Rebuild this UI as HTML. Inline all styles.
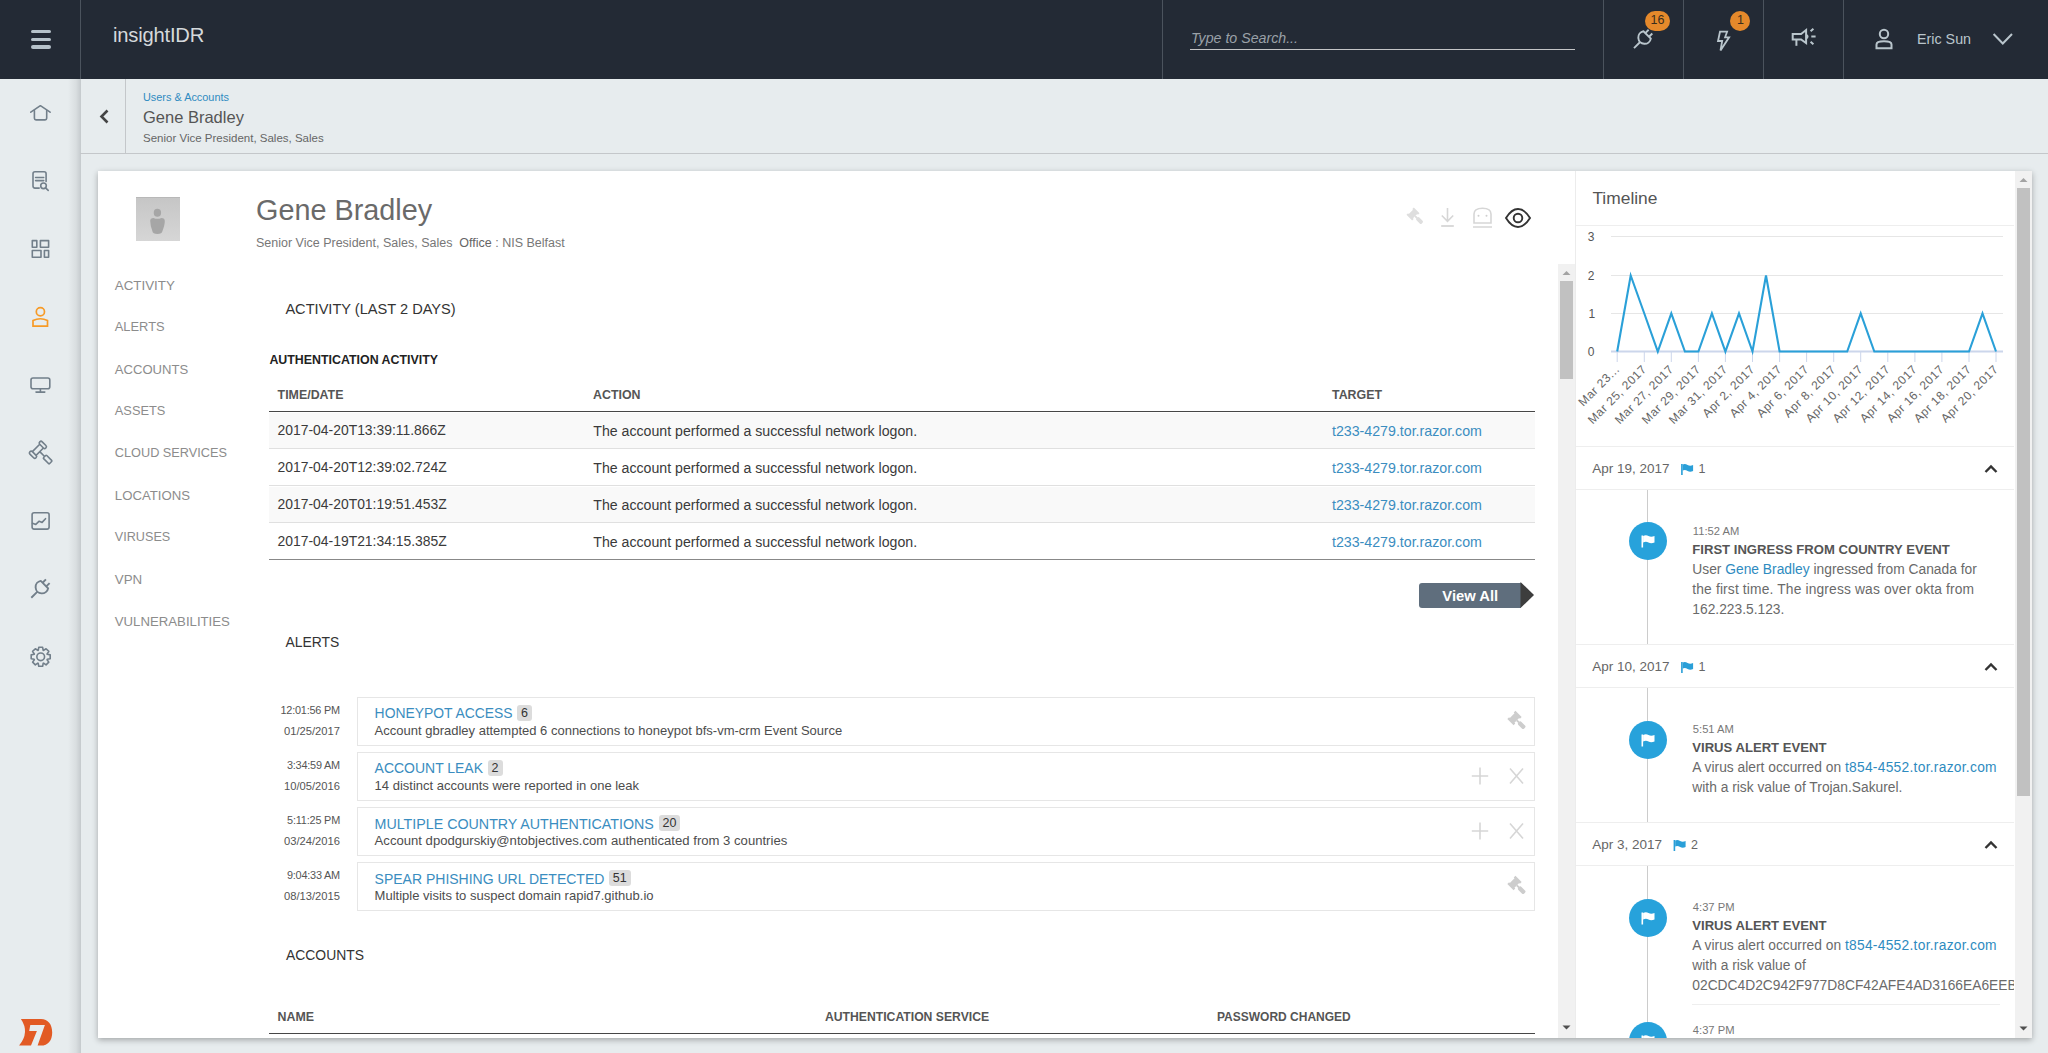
<!DOCTYPE html>
<html><head><meta charset="utf-8">
<style>
*{box-sizing:border-box;margin:0;padding:0}
html,body{width:2048px;height:1053px;overflow:hidden;background:#e7ecee;font-family:"Liberation Sans",sans-serif;position:relative}
.a{position:absolute}
.t{position:absolute;white-space:nowrap;line-height:1}
svg.ov{position:absolute;left:0;top:0;width:2048px;height:1053px;pointer-events:none}
</style></head><body>
<div class="a" style="left:0px;top:0px;width:2048px;height:79px;background:#232a35;"></div>
<div class="a" style="left:0px;top:79px;width:81px;height:974px;background:linear-gradient(to right,#e7ecee 0,#e7ecee 68px,#d9dee0 76px,#c5cacd 81px);"></div>
<div class="a" style="left:80px;top:153px;width:1968px;height:1px;background:#c4c7ca;"></div>
<div class="a" style="left:125px;top:79px;width:1px;height:74px;background:#c4c7ca;"></div>
<div class="a" style="left:98px;top:171px;width:1934px;height:867px;background:#fff;box-shadow:0 2px 6px rgba(0,0,0,.3)"></div>
<div class="a" style="left:31px;top:30px;width:20px;height:3px;background:#b6c2ca;border-radius:2px"></div>
<div class="a" style="left:31px;top:38px;width:20px;height:3px;background:#b6c2ca;border-radius:2px"></div>
<div class="a" style="left:31px;top:45px;width:20px;height:3.5px;background:#b6c2ca;border-radius:2px"></div>
<div class="a" style="left:80px;top:0px;width:1px;height:79px;background:#4b535d;"></div>
<div class="a" style="left:1162px;top:0px;width:1px;height:79px;background:#4b535d;"></div>
<div class="a" style="left:1603px;top:0px;width:1px;height:79px;background:#4b535d;"></div>
<div class="a" style="left:1683px;top:0px;width:1px;height:79px;background:#4b535d;"></div>
<div class="a" style="left:1763px;top:0px;width:1px;height:79px;background:#4b535d;"></div>
<div class="a" style="left:1843px;top:0px;width:1px;height:79px;background:#4b535d;"></div>
<div class="t" style="left:113.0px;top:24.5px;font-size:20.2px;color:#d5d9dc;font-weight:normal;font-style:normal;letter-spacing:-0.2px">insightIDR</div>
<div class="t" style="left:1191.0px;top:31.0px;font-size:14.2px;color:#9aa1a8;font-weight:normal;font-style:italic;">Type to Search...</div>
<div class="a" style="left:1190px;top:49px;width:385px;height:1px;background:#c4c5c7;"></div>
<div class="t" style="left:1917.0px;top:32.1px;font-size:14.3px;color:#b9c5cc;font-weight:normal;font-style:normal;">Eric Sun</div>
<div class="a" style="left:1645px;top:11px;width:25px;height:20px;background:#e5892b;border-radius:10px"></div>
<div class="t" style="left:1650.5px;top:13.6px;font-size:12.5px;color:#3a2d1c;font-weight:normal;font-style:normal;">16</div>
<div class="a" style="left:1730px;top:11px;width:20px;height:20px;background:#e5892b;border-radius:10px"></div>
<div class="t" style="left:1737.0px;top:13.6px;font-size:12.5px;color:#3a2d1c;font-weight:normal;font-style:normal;">1</div>
<div class="t" style="left:143.0px;top:91.6px;font-size:10.9px;color:#2f8bc1;font-weight:normal;font-style:normal;">Users &amp; Accounts</div>
<div class="t" style="left:143.0px;top:109.4px;font-size:16.5px;color:#555;font-weight:normal;font-style:normal;">Gene Bradley</div>
<div class="t" style="left:143.0px;top:133.3px;font-size:11.5px;color:#666;font-weight:normal;font-style:normal;">Senior Vice President, Sales, Sales</div>
<div class="a" style="left:136px;top:197px;width:44px;height:44px;background:linear-gradient(#c6c6c6,#d6d6d6);border-top:1px solid #b8b8b8"></div>
<div class="t" style="left:114.8px;top:278.7px;font-size:13.33px;color:#8c8c8c;font-weight:normal;font-style:normal;">ACTIVITY</div>
<div class="t" style="left:114.8px;top:321.1px;font-size:12.86px;color:#8c8c8c;font-weight:normal;font-style:normal;">ALERTS</div>
<div class="t" style="left:114.8px;top:362.9px;font-size:13.08px;color:#8c8c8c;font-weight:normal;font-style:normal;">ACCOUNTS</div>
<div class="t" style="left:114.8px;top:405.2px;font-size:12.82px;color:#8c8c8c;font-weight:normal;font-style:normal;">ASSETS</div>
<div class="t" style="left:114.8px;top:447.3px;font-size:12.72px;color:#8c8c8c;font-weight:normal;font-style:normal;">CLOUD SERVICES</div>
<div class="t" style="left:114.8px;top:488.8px;font-size:13.2px;color:#8c8c8c;font-weight:normal;font-style:normal;">LOCATIONS</div>
<div class="t" style="left:114.8px;top:531.3px;font-size:12.64px;color:#8c8c8c;font-weight:normal;font-style:normal;">VIRUSES</div>
<div class="t" style="left:114.8px;top:572.7px;font-size:13.33px;color:#8c8c8c;font-weight:normal;font-style:normal;">VPN</div>
<div class="t" style="left:114.8px;top:614.8px;font-size:13.2px;color:#8c8c8c;font-weight:normal;font-style:normal;">VULNERABILITIES</div>
<div class="t" style="left:256.0px;top:195.7px;font-size:28.8px;color:#6a6a6a;font-weight:normal;font-style:normal;">Gene Bradley</div>
<div class="t" style="left:256.0px;top:236.9px;font-size:12.5px;color:#777;font-weight:normal;font-style:normal;">Senior Vice President, Sales, Sales &nbsp;<span style="color:#666">Office</span> : NIS Belfast</div>
<div class="a" style="left:1558px;top:264px;width:17px;height:774px;background:#f1f1f1;"></div>
<div class="a" style="left:1560px;top:281px;width:13px;height:98px;background:#c1c1c1;"></div>
<div class="t" style="left:285.4px;top:302.1px;font-size:14.6px;color:#333;font-weight:normal;font-style:normal;">ACTIVITY (LAST 2 DAYS)</div>
<div class="t" style="left:269.4px;top:353.7px;font-size:12.4px;color:#222;font-weight:bold;font-style:normal;">AUTHENTICATION ACTIVITY</div>
<div class="t" style="left:277.6px;top:388.5px;font-size:12.4px;color:#555;font-weight:bold;font-style:normal;">TIME/DATE</div>
<div class="t" style="left:593.0px;top:388.5px;font-size:12.4px;color:#555;font-weight:bold;font-style:normal;">ACTION</div>
<div class="t" style="left:1332.0px;top:388.5px;font-size:12.4px;color:#555;font-weight:bold;font-style:normal;">TARGET</div>
<div class="a" style="left:269px;top:411px;width:1266px;height:1px;background:#474747;"></div>
<div class="a" style="left:269px;top:413px;width:1266px;height:36px;background:#f9f9f9;"></div>
<div class="a" style="left:269px;top:448px;width:1266px;height:1px;background:#e0e0e0;"></div>
<div class="t" style="left:277.6px;top:423.8px;font-size:13.9px;color:#3a3a3a;font-weight:normal;font-style:normal;">2017-04-20T13:39:11.866Z</div>
<div class="t" style="left:593.3px;top:423.5px;font-size:14.15px;color:#3a3a3a;font-weight:normal;font-style:normal;">The account performed a successful network logon.</div>
<div class="t" style="left:1332.0px;top:423.5px;font-size:14.2px;color:#3b8dc0;font-weight:normal;font-style:normal;">t233-4279.tor.razor.com</div>
<div class="a" style="left:269px;top:485px;width:1266px;height:1px;background:#e0e0e0;"></div>
<div class="t" style="left:277.6px;top:460.8px;font-size:13.9px;color:#3a3a3a;font-weight:normal;font-style:normal;">2017-04-20T12:39:02.724Z</div>
<div class="t" style="left:593.3px;top:460.5px;font-size:14.15px;color:#3a3a3a;font-weight:normal;font-style:normal;">The account performed a successful network logon.</div>
<div class="t" style="left:1332.0px;top:460.5px;font-size:14.2px;color:#3b8dc0;font-weight:normal;font-style:normal;">t233-4279.tor.razor.com</div>
<div class="a" style="left:269px;top:487px;width:1266px;height:36px;background:#f9f9f9;"></div>
<div class="a" style="left:269px;top:522px;width:1266px;height:1px;background:#e0e0e0;"></div>
<div class="t" style="left:277.6px;top:497.8px;font-size:13.9px;color:#3a3a3a;font-weight:normal;font-style:normal;">2017-04-20T01:19:51.453Z</div>
<div class="t" style="left:593.3px;top:497.5px;font-size:14.15px;color:#3a3a3a;font-weight:normal;font-style:normal;">The account performed a successful network logon.</div>
<div class="t" style="left:1332.0px;top:497.5px;font-size:14.2px;color:#3b8dc0;font-weight:normal;font-style:normal;">t233-4279.tor.razor.com</div>
<div class="t" style="left:277.6px;top:534.8px;font-size:13.9px;color:#3a3a3a;font-weight:normal;font-style:normal;">2017-04-19T21:34:15.385Z</div>
<div class="t" style="left:593.3px;top:534.5px;font-size:14.15px;color:#3a3a3a;font-weight:normal;font-style:normal;">The account performed a successful network logon.</div>
<div class="t" style="left:1332.0px;top:534.5px;font-size:14.2px;color:#3b8dc0;font-weight:normal;font-style:normal;">t233-4279.tor.razor.com</div>
<div class="a" style="left:269px;top:559px;width:1266px;height:1px;background:#888;"></div>
<div class="a" style="left:1419px;top:583px;width:102px;height:25px;background:#5f6e7d;border-radius:3px 0 0 3px"></div>
<div class="t" style="left:1442.3px;top:588.5px;font-size:14.8px;color:#fff;font-weight:bold;font-style:normal;">View All</div>
<div class="t" style="left:285.5px;top:635.5px;font-size:13.9px;color:#333;font-weight:normal;font-style:normal;">ALERTS</div>
<div class="a" style="left:357px;top:697px;width:1178px;height:49px;background:#fff;border:1px solid #e6e6e6"></div>
<div class="t" style="right:1708.0px;top:704.8px;font-size:10.9px;color:#555;font-weight:normal;font-style:normal;letter-spacing:-0.2px">12:01:56 PM</div>
<div class="t" style="right:1708.0px;top:726.3px;font-size:11.2px;color:#555;font-weight:normal;font-style:normal;">01/25/2017</div>
<div class="t" style="left:374.6px;top:707.3px;font-size:13.9px;color:#3a8dc0;font-weight:normal;font-style:normal;">HONEYPOT ACCESS</div>
<div class="t" style="left:374.6px;top:724.0px;font-size:13.0px;color:#4d4d4d;font-weight:normal;font-style:normal;">Account gbradley attempted 6 connections to honeypot bfs-vm-crm Event Source</div>
<div class="a" style="left:517.1px;top:705px;width:15.0px;height:16px;background:#dcdcdc;border-radius:3px"></div>
<div class="t" style="left:521.1px;top:707.4px;font-size:12.5px;color:#333;font-weight:normal;font-style:normal;">6</div>
<div class="a" style="left:357px;top:752px;width:1178px;height:49px;background:#fff;border:1px solid #e6e6e6"></div>
<div class="t" style="right:1708.0px;top:759.8px;font-size:10.9px;color:#555;font-weight:normal;font-style:normal;letter-spacing:-0.2px">3:34:59 AM</div>
<div class="t" style="right:1708.0px;top:781.3px;font-size:11.2px;color:#555;font-weight:normal;font-style:normal;">10/05/2016</div>
<div class="t" style="left:374.6px;top:762.2px;font-size:13.97px;color:#3a8dc0;font-weight:normal;font-style:normal;">ACCOUNT LEAK</div>
<div class="t" style="left:374.6px;top:779.0px;font-size:13.0px;color:#4d4d4d;font-weight:normal;font-style:normal;">14 distinct accounts were reported in one leak</div>
<div class="a" style="left:487.5px;top:760px;width:15.0px;height:16px;background:#dcdcdc;border-radius:3px"></div>
<div class="t" style="left:491.5px;top:762.4px;font-size:12.5px;color:#333;font-weight:normal;font-style:normal;">2</div>
<div class="a" style="left:357px;top:807px;width:1178px;height:49px;background:#fff;border:1px solid #e6e6e6"></div>
<div class="t" style="right:1708.0px;top:814.8px;font-size:10.9px;color:#555;font-weight:normal;font-style:normal;letter-spacing:-0.2px">5:11:25 PM</div>
<div class="t" style="right:1708.0px;top:836.3px;font-size:11.2px;color:#555;font-weight:normal;font-style:normal;">03/24/2016</div>
<div class="t" style="left:374.6px;top:817.0px;font-size:14.26px;color:#3a8dc0;font-weight:normal;font-style:normal;">MULTIPLE COUNTRY AUTHENTICATIONS</div>
<div class="t" style="left:374.6px;top:833.9px;font-size:13.12px;color:#4d4d4d;font-weight:normal;font-style:normal;">Account dpodgurskiy@ntobjectives.com authenticated from 3 countries</div>
<div class="a" style="left:658.5px;top:815px;width:21.9px;height:16px;background:#dcdcdc;border-radius:3px"></div>
<div class="t" style="left:662.5px;top:817.4px;font-size:12.5px;color:#333;font-weight:normal;font-style:normal;">20</div>
<div class="a" style="left:357px;top:862px;width:1178px;height:49px;background:#fff;border:1px solid #e6e6e6"></div>
<div class="t" style="right:1708.0px;top:869.8px;font-size:10.9px;color:#555;font-weight:normal;font-style:normal;letter-spacing:-0.2px">9:04:33 AM</div>
<div class="t" style="right:1708.0px;top:891.3px;font-size:11.2px;color:#555;font-weight:normal;font-style:normal;">08/13/2015</div>
<div class="t" style="left:374.6px;top:872.2px;font-size:14.0px;color:#3a8dc0;font-weight:normal;font-style:normal;">SPEAR PHISHING URL DETECTED</div>
<div class="t" style="left:374.6px;top:889.0px;font-size:13.0px;color:#4d4d4d;font-weight:normal;font-style:normal;">Multiple visits to suspect domain rapid7.github.io</div>
<div class="a" style="left:608.8px;top:870px;width:21.9px;height:16px;background:#dcdcdc;border-radius:3px"></div>
<div class="t" style="left:612.8px;top:872.4px;font-size:12.5px;color:#333;font-weight:normal;font-style:normal;">51</div>
<div class="t" style="left:286.0px;top:949.1px;font-size:13.9px;color:#333;font-weight:normal;font-style:normal;">ACCOUNTS</div>
<div class="t" style="left:277.6px;top:1010.5px;font-size:12.4px;color:#555;font-weight:bold;font-style:normal;">NAME</div>
<div class="t" style="left:825.0px;top:1010.7px;font-size:12.2px;color:#555;font-weight:bold;font-style:normal;">AUTHENTICATION SERVICE</div>
<div class="t" style="left:1217.0px;top:1010.9px;font-size:12.0px;color:#555;font-weight:bold;font-style:normal;">PASSWORD CHANGED</div>
<div class="a" style="left:269px;top:1033px;width:1266px;height:1px;background:#474747;"></div>
<div class="a" style="left:1575px;top:171px;width:1px;height:867px;background:#ececec;"></div>
<div class="t" style="left:1592.4px;top:190.3px;font-size:17.4px;color:#555;font-weight:normal;font-style:normal;">Timeline</div>
<div class="a" style="left:1576px;top:225px;width:438px;height:1px;background:#eeeeee;"></div>
<div class="t" style="left:1587.7px;top:345.9px;font-size:12px;color:#555;font-weight:normal;font-style:normal;">0</div>
<div class="t" style="left:1588.5px;top:307.9px;font-size:12px;color:#555;font-weight:normal;font-style:normal;">1</div>
<div class="t" style="left:1587.7px;top:269.9px;font-size:12px;color:#555;font-weight:normal;font-style:normal;">2</div>
<div class="t" style="left:1587.7px;top:230.9px;font-size:12px;color:#555;font-weight:normal;font-style:normal;">3</div>
<div class="a" style="left:1576px;top:446px;width:438px;height:1px;background:#eeeeee;"></div>
<div class="a" style="left:1647px;top:489px;width:1px;height:155px;background:#cccccc;"></div>
<div class="a" style="left:1647px;top:687px;width:1px;height:135px;background:#cccccc;"></div>
<div class="a" style="left:1647px;top:865px;width:1px;height:172px;background:#cccccc;"></div>
<div class="t" style="left:1592.3px;top:462.1px;font-size:13.5px;color:#666;font-weight:normal;font-style:normal;">Apr 19, 2017</div>
<div class="t" style="left:1698.6px;top:462.9px;font-size:12.5px;color:#666;font-weight:normal;font-style:normal;">1</div>
<div class="a" style="left:1576px;top:489px;width:438px;height:1px;background:#eeeeee;"></div>
<div class="a" style="left:1576px;top:446px;width:438px;height:1px;background:#eeeeee;"></div>
<div class="t" style="left:1692.8px;top:525.8px;font-size:11.2px;color:#777;font-weight:normal;font-style:normal;">11:52 AM</div>
<div class="t" style="left:1692.3px;top:542.8px;font-size:13.1px;color:#555;font-weight:bold;font-style:normal;">FIRST INGRESS FROM COUNTRY EVENT</div>
<div class="t" style="left:1692.3px;top:563.3px;font-size:13.8px;color:#6a6a6a;font-weight:normal;font-style:normal;">User <span style="color:#2e8bc0">Gene Bradley</span> ingressed from Canada for</div>
<div class="t" style="left:1692.3px;top:583.3px;font-size:13.8px;color:#6a6a6a;font-weight:normal;font-style:normal;"><span style="letter-spacing:0.15px">the first time. The ingress was over okta from</span></div>
<div class="t" style="left:1692.3px;top:603.3px;font-size:13.8px;color:#6a6a6a;font-weight:normal;font-style:normal;">162.223.5.123.</div>
<div class="t" style="left:1592.3px;top:660.1px;font-size:13.5px;color:#666;font-weight:normal;font-style:normal;">Apr 10, 2017</div>
<div class="t" style="left:1698.6px;top:660.9px;font-size:12.5px;color:#666;font-weight:normal;font-style:normal;">1</div>
<div class="a" style="left:1576px;top:687px;width:438px;height:1px;background:#eeeeee;"></div>
<div class="a" style="left:1576px;top:644px;width:438px;height:1px;background:#eeeeee;"></div>
<div class="t" style="left:1692.8px;top:723.6px;font-size:11.2px;color:#777;font-weight:normal;font-style:normal;">5:51 AM</div>
<div class="t" style="left:1692.3px;top:740.6px;font-size:13.1px;color:#555;font-weight:bold;font-style:normal;">VIRUS ALERT EVENT</div>
<div class="t" style="left:1692.3px;top:761.1px;font-size:13.8px;color:#6a6a6a;font-weight:normal;font-style:normal;">A virus alert occurred on <span style="color:#2e8bc0;letter-spacing:0.27px">t854-4552.tor.razor.com</span></div>
<div class="t" style="left:1692.3px;top:781.1px;font-size:13.8px;color:#6a6a6a;font-weight:normal;font-style:normal;">with a risk value of Trojan.Sakurel.</div>
<div class="t" style="left:1592.3px;top:838.1px;font-size:13.5px;color:#666;font-weight:normal;font-style:normal;">Apr 3, 2017</div>
<div class="t" style="left:1691.1px;top:838.9px;font-size:12.5px;color:#666;font-weight:normal;font-style:normal;">2</div>
<div class="a" style="left:1576px;top:865px;width:438px;height:1px;background:#eeeeee;"></div>
<div class="a" style="left:1576px;top:822px;width:438px;height:1px;background:#eeeeee;"></div>
<div class="t" style="left:1692.8px;top:901.6px;font-size:11.2px;color:#777;font-weight:normal;font-style:normal;">4:37 PM</div>
<div class="t" style="left:1692.3px;top:918.6px;font-size:13.1px;color:#555;font-weight:bold;font-style:normal;">VIRUS ALERT EVENT</div>
<div class="t" style="left:1692.3px;top:939.1px;font-size:13.8px;color:#6a6a6a;font-weight:normal;font-style:normal;">A virus alert occurred on <span style="color:#2e8bc0;letter-spacing:0.27px">t854-4552.tor.razor.com</span></div>
<div class="t" style="left:1692.3px;top:959.1px;font-size:13.8px;color:#6a6a6a;font-weight:normal;font-style:normal;">with a risk value of</div>
<div class="t" style="left:1692.3px;top:979.1px;font-size:13.8px;color:#6a6a6a;font-weight:normal;font-style:normal;"><span style="display:inline-block;width:322px;overflow:hidden;vertical-align:top">02CDC4D2C942F977D8CF42AFE4AD3166EA6EEB6D</span></div>
<div class="a" style="left:1692px;top:1004px;width:308px;height:1px;background:#eeeeee;"></div>
<div class="t" style="left:1692.8px;top:1024.6px;font-size:11.2px;color:#777;font-weight:normal;font-style:normal;">4:37 PM</div>
<div class="a" style="left:2015px;top:171px;width:17px;height:867px;background:#f1f1f1;"></div>
<div class="a" style="left:2017px;top:188px;width:13px;height:608px;background:#c1c1c1;"></div>
<svg class="ov" width="2048" height="1053" viewBox="0 0 2048 1053"><defs><clipPath id="clipc"><rect x="1576" y="171" width="439" height="867"/></clipPath></defs><g transform="translate(1644.6,37.5) rotate(45)" fill="none" stroke="#b9c5cc" stroke-width="1.9"><path d="M-5.17 -3.6 A6.3 6.3 0 1 0 5.17 -3.6 Z"/><path d="M-2.6 -3.6 V-8.3 M2.6 -3.6 V-8.3 M0 6.3 V15"/></g>
<path d="M1720 31.7 H1727.1 L1725.1 37.3 H1729.1 L1720.5 50.4 L1722.2 41 H1718 Z" fill="none" stroke="#b9c5cc" stroke-width="1.8" stroke-linejoin="miter"/>
<g fill="none" stroke="#b9c5cc" stroke-width="2"><path d="M1792.7 34 H1801.1 L1806.1 30 V43 L1801.1 39.5 H1792.7 Z"/><path d="M1796.4 39.5 V45.8"/><path d="M1806.3 34.7 A1.9 1.9 0 0 1 1806.3 38.4" stroke-width="1.6"/><path d="M1811.3 36.5 H1815.6 M1810.6 31.3 L1813.4 28.7 M1810.6 41.7 L1813.4 44.3"/></g>
<g fill="none" stroke="#b9c5cc" stroke-width="2"><circle cx="1884" cy="34" r="4.2"/><path d="M1876.5 48.3 V44.5 Q1876.5 41.3 1884 41.3 Q1891.5 41.3 1891.5 44.5 V48.3 Z"/></g>
<path d="M1993.6 34 L2002.8 43.5 L2012 34" fill="none" stroke="#b9c5cc" stroke-width="2"/>
<g fill="none" stroke="#727f8a" stroke-width="1.6" stroke-linejoin="round" stroke-linecap="round"><path d="M30.8 112.2 L40.4 105.7 L50.1 112.2"/><path d="M34.4 110.5 V118.3 Q34.4 119.9 36 119.9 H45.1 Q46.7 119.9 46.7 118.3 V110.5"/><path d="M46.1 181.5 V173.8 Q46.1 171.8 44.1 171.8 H35 Q33 171.8 33 173.8 V186.1 Q33 188.1 35 188.1 H39.2"/><path d="M35.6 177.5 H43.7 M35.6 180.6 H43.7"/><circle cx="43.5" cy="185.8" r="2.8"/><path d="M45.6 187.9 L48.2 190.4"/><rect x="32.3" y="240.6" width="4.5" height="6.7"/><rect x="40.4" y="240.6" width="8.2" height="6.7"/><rect x="32.3" y="250.5" width="8.7" height="6.7"/><rect x="44.4" y="250.5" width="4.2" height="6.7"/><rect x="31" y="378" width="18.8" height="10.7" rx="2"/><path d="M40.4 388.7 V392 M36 392.1 H44.8"/><rect x="32.1" y="512.7" width="17" height="16.4" rx="2"/><path d="M32.5 523.2 L35.8 524.4 L39.2 521.2 L42.1 522.4 L45.5 518.7"/></g>
<g transform="translate(41.9,587.1) rotate(45)" fill="none" stroke="#727f8a" stroke-width="1.9"><path d="M-5.17 -3.6 A6.3 6.3 0 1 0 5.17 -3.6 Z"/><path d="M-2.6 -3.6 V-8.3 M2.6 -3.6 V-8.3 M0 6.3 V15"/></g>
<g fill="none" stroke="#f79a26" stroke-width="1.7"><circle cx="40.4" cy="311.7" r="4.1"/><path d="M33 326.2 V320.5 Q40.4 317 47.5 320.5 V326.2 Z"/></g>
<g transform="translate(37.9,449.8) rotate(-45)" fill="none" stroke="#727f8a" stroke-width="1.6"><rect x="-8.7" y="-4.3" width="3.5" height="8.6" rx="1.7"/><rect x="5.2" y="-4.3" width="3.5" height="8.6" rx="1.7"/><path d="M-5.2 -2.6 H5.2 M-5.2 2.6 H5.2 M0 2.6 V9.5"/><rect x="-2.2" y="9.5" width="4.4" height="8.5" rx="0.8"/></g>
<path d="M38.23 650.25 L38.77 647.29 L42.63 647.29 L43.17 650.25 L43.59 650.42 L46.06 648.72 L48.78 651.44 L47.08 653.91 L47.25 654.33 L50.21 654.87 L50.21 658.73 L47.25 659.27 L47.08 659.69 L48.78 662.16 L46.06 664.88 L43.59 663.18 L43.17 663.35 L42.63 666.31 L38.77 666.31 L38.23 663.35 L37.81 663.18 L35.34 664.88 L32.62 662.16 L34.32 659.69 L34.15 659.27 L31.19 658.73 L31.19 654.87 L34.15 654.33 L34.32 653.91 L32.62 651.44 L35.34 648.72 L37.81 650.42Z" fill="none" stroke="#727f8a" stroke-width="1.6" stroke-linejoin="round"/><circle cx="40.7" cy="656.8" r="3.85" fill="none" stroke="#727f8a" stroke-width="1.6"/>
<path d="M20.9 1019.1 H41 C48 1019.1 52.2 1024.5 52.2 1032.4 C52.2 1040.3 48 1045.6 41 1045.6 H37.6 L44.9 1024.9 H30.3 L29.2 1031 H36.9 L31 1045.6 H19.1 Q30 1032.4 20.9 1019.1 Z" fill="#e25a24"/>
<path d="M107.5 110.5 L101.5 116.5 L107.5 122.5" fill="none" stroke="#444" stroke-width="2.6"/>
<g fill="#a6a6a6"><ellipse cx="157.4" cy="212.8" rx="3.7" ry="4"/><path d="M150.2 221 Q150.2 218 153.5 217.9 Q157.4 219.8 161.5 217.9 Q164.8 218 164.8 221 Q164.8 225 162.3 231.5 Q162 233.9 157.4 233.9 Q152.8 233.9 152.5 231.5 Q150.2 225 150.2 221 Z"/></g>
<g transform="translate(1413,214) rotate(-45) scale(1)" fill="#dedede"><path d="M-5.2 -4 H-3 V-3 H3 V-4 H5.2 V4 H3 V3 H-3 V4 H-5.2 Z"/><rect x="-0.9" y="3" width="1.8" height="3"/><rect x="-2" y="5.5" width="4" height="7.5" rx="1.5"/></g>
<g fill="none" stroke="#d6d6d6" stroke-width="1.6"><path d="M1447.5 208 V221 M1441.8 215.5 L1447.5 221.3 L1453.2 215.5"/><path d="M1441.2 226 H1453.8" stroke-width="1.8"/><path d="M1474 223 V214 Q1474 208.2 1482.5 208.2 Q1491 208.2 1491 214 V223 Z"/><path d="M1473 227 H1492" stroke-width="1.5"/></g><g fill="#cfcfcf"><circle cx="1478.5" cy="215.8" r="1"/><circle cx="1486.5" cy="215.8" r="1"/></g>
<g fill="none" stroke="#333" stroke-width="1.9"><path d="M1506 218 C1510 211.5 1513.5 209 1518 209 C1522.5 209 1526 211.5 1530 218 C1526 224.5 1522.5 227 1518 227 C1513.5 227 1510 224.5 1506 218 Z"/><circle cx="1518" cy="218" r="4.3"/></g>
<path d="M1562.5 275 L1566.5 271 L1570.5 275 Z" fill="#a3a3a3"/>
<path d="M1562.5 1025.5 L1566.5 1029.5 L1570.5 1025.5 Z" fill="#505050"/>
<path d="M1520.5 582 L1534 595 L1520.5 608 Z" fill="#3d3d3d"/>
<g transform="translate(1514.5,718) rotate(-45) scale(1.1)" fill="#cdcdcd"><path d="M-5.2 -4 H-3 V-3 H3 V-4 H5.2 V4 H3 V3 H-3 V4 H-5.2 Z"/><rect x="-0.9" y="3" width="1.8" height="3"/><rect x="-2" y="5.5" width="4" height="7.5" rx="1.5"/></g>
<g fill="none" stroke="#d6d6d6" stroke-width="1.6"><path d="M1480 767.5 V784.5 M1471.8 776 H1488.2"/><path d="M1510 768.5 L1523 783.5 M1523 768.5 L1510 783.5"/></g>
<g fill="none" stroke="#d6d6d6" stroke-width="1.6"><path d="M1480 822.5 V839.5 M1471.8 831 H1488.2"/><path d="M1510 823.5 L1523 838.5 M1523 823.5 L1510 838.5"/></g>
<g transform="translate(1514.5,883) rotate(-45) scale(1.1)" fill="#cdcdcd"><path d="M-5.2 -4 H-3 V-3 H3 V-4 H5.2 V4 H3 V3 H-3 V4 H-5.2 Z"/><rect x="-0.9" y="3" width="1.8" height="3"/><rect x="-2" y="5.5" width="4" height="7.5" rx="1.5"/></g>
<path d="M1611 351.5 H2003" stroke="#ccd6eb" stroke-width="2"/>
<path d="M1611 313.5 H2003" stroke="#e6e6e6" stroke-width="1.2"/>
<path d="M1611 275.5 H2003" stroke="#e6e6e6" stroke-width="1.2"/>
<path d="M1611 236.5 H2003" stroke="#e6e6e6" stroke-width="1.2"/>
<path d="M1617.2 352 V362" stroke="#ccd6eb" stroke-width="1"/>
<path d="M1644.3 352 V362" stroke="#ccd6eb" stroke-width="1"/>
<path d="M1671.3 352 V362" stroke="#ccd6eb" stroke-width="1"/>
<path d="M1698.4 352 V362" stroke="#ccd6eb" stroke-width="1"/>
<path d="M1725.4 352 V362" stroke="#ccd6eb" stroke-width="1"/>
<path d="M1752.5 352 V362" stroke="#ccd6eb" stroke-width="1"/>
<path d="M1779.6 352 V362" stroke="#ccd6eb" stroke-width="1"/>
<path d="M1806.6 352 V362" stroke="#ccd6eb" stroke-width="1"/>
<path d="M1833.7 352 V362" stroke="#ccd6eb" stroke-width="1"/>
<path d="M1860.7 352 V362" stroke="#ccd6eb" stroke-width="1"/>
<path d="M1887.8 352 V362" stroke="#ccd6eb" stroke-width="1"/>
<path d="M1914.9 352 V362" stroke="#ccd6eb" stroke-width="1"/>
<path d="M1941.9 352 V362" stroke="#ccd6eb" stroke-width="1"/>
<path d="M1969.0 352 V362" stroke="#ccd6eb" stroke-width="1"/>
<path d="M1996.0 352 V362" stroke="#ccd6eb" stroke-width="1"/>
<polyline points="1617.2,351.5 1630.7,275.5 1644.3,313.5 1657.8,351.5 1671.3,313.5 1684.9,351.5 1698.4,351.5 1711.9,313.5 1725.4,351.5 1739.0,313.5 1752.5,351.5 1766.0,275.5 1779.6,351.5 1793.1,351.5 1806.6,351.5 1820.2,351.5 1833.7,351.5 1847.2,351.5 1860.7,313.5 1874.3,351.5 1887.8,351.5 1901.3,351.5 1914.9,351.5 1928.4,351.5 1941.9,351.5 1955.5,351.5 1969.0,351.5 1982.5,313.5 1996.0,351.5" fill="none" stroke="#2aa0d8" stroke-width="2.1" stroke-linejoin="miter"/>
<text x="1620.2" y="370" transform="rotate(-45 1620.2 370)" text-anchor="end" font-family="Liberation Sans" font-size="12" letter-spacing="0.55" fill="#666">Mar 23...</text>
<text x="1647.3" y="370" transform="rotate(-45 1647.3 370)" text-anchor="end" font-family="Liberation Sans" font-size="12" letter-spacing="0.55" fill="#666">Mar 25, 2017</text>
<text x="1674.3" y="370" transform="rotate(-45 1674.3 370)" text-anchor="end" font-family="Liberation Sans" font-size="12" letter-spacing="0.55" fill="#666">Mar 27, 2017</text>
<text x="1701.4" y="370" transform="rotate(-45 1701.4 370)" text-anchor="end" font-family="Liberation Sans" font-size="12" letter-spacing="0.55" fill="#666">Mar 29, 2017</text>
<text x="1728.4" y="370" transform="rotate(-45 1728.4 370)" text-anchor="end" font-family="Liberation Sans" font-size="12" letter-spacing="0.55" fill="#666">Mar 31, 2017</text>
<text x="1755.5" y="370" transform="rotate(-45 1755.5 370)" text-anchor="end" font-family="Liberation Sans" font-size="12" letter-spacing="0.55" fill="#666">Apr 2, 2017</text>
<text x="1782.6" y="370" transform="rotate(-45 1782.6 370)" text-anchor="end" font-family="Liberation Sans" font-size="12" letter-spacing="0.55" fill="#666">Apr 4, 2017</text>
<text x="1809.6" y="370" transform="rotate(-45 1809.6 370)" text-anchor="end" font-family="Liberation Sans" font-size="12" letter-spacing="0.55" fill="#666">Apr 6, 2017</text>
<text x="1836.7" y="370" transform="rotate(-45 1836.7 370)" text-anchor="end" font-family="Liberation Sans" font-size="12" letter-spacing="0.55" fill="#666">Apr 8, 2017</text>
<text x="1863.7" y="370" transform="rotate(-45 1863.7 370)" text-anchor="end" font-family="Liberation Sans" font-size="12" letter-spacing="0.55" fill="#666">Apr 10, 2017</text>
<text x="1890.8" y="370" transform="rotate(-45 1890.8 370)" text-anchor="end" font-family="Liberation Sans" font-size="12" letter-spacing="0.55" fill="#666">Apr 12, 2017</text>
<text x="1917.9" y="370" transform="rotate(-45 1917.9 370)" text-anchor="end" font-family="Liberation Sans" font-size="12" letter-spacing="0.55" fill="#666">Apr 14, 2017</text>
<text x="1944.9" y="370" transform="rotate(-45 1944.9 370)" text-anchor="end" font-family="Liberation Sans" font-size="12" letter-spacing="0.55" fill="#666">Apr 16, 2017</text>
<text x="1972.0" y="370" transform="rotate(-45 1972.0 370)" text-anchor="end" font-family="Liberation Sans" font-size="12" letter-spacing="0.55" fill="#666">Apr 18, 2017</text>
<text x="1999.0" y="370" transform="rotate(-45 1999.0 370)" text-anchor="end" font-family="Liberation Sans" font-size="12" letter-spacing="0.55" fill="#666">Apr 20, 2017</text>
<g fill="#2a9fd8"><rect x="1681.1" y="464" width="1.6" height="11"/><path d="M1682.7 464.5 Q1685.1 463.5 1687.6 465 Q1690.1 466.5 1693.1 465 V471 Q1690.1 472.5 1687.6 471 Q1685.1 469.5 1682.7 470.5 Z"/></g>
<path d="M1985.5 472 L1991 466.5 L1996.5 472" fill="none" stroke="#333" stroke-width="2.4"/>
<g clip-path="url(#clipc)"><circle cx="1648" cy="541" r="19" fill="#27a2db"/>
<g fill="#fff"><rect x="1641.5" y="535.5" width="1.6" height="12"/><path d="M1643.1 536 Q1646 534.5 1648.5 536 Q1651 537.5 1654.5 536 V542.5 Q1651 544 1648.5 542.5 Q1646 541 1643.1 542.5 Z"/></g></g>
<g fill="#2a9fd8"><rect x="1681.1" y="662" width="1.6" height="11"/><path d="M1682.7 662.5 Q1685.1 661.5 1687.6 663 Q1690.1 664.5 1693.1 663 V669 Q1690.1 670.5 1687.6 669 Q1685.1 667.5 1682.7 668.5 Z"/></g>
<path d="M1985.5 670 L1991 664.5 L1996.5 670" fill="none" stroke="#333" stroke-width="2.4"/>
<g clip-path="url(#clipc)"><circle cx="1648" cy="740" r="19" fill="#27a2db"/>
<g fill="#fff"><rect x="1641.5" y="734.5" width="1.6" height="12"/><path d="M1643.1 735 Q1646 733.5 1648.5 735 Q1651 736.5 1654.5 735 V741.5 Q1651 743 1648.5 741.5 Q1646 740 1643.1 741.5 Z"/></g></g>
<g fill="#2a9fd8"><rect x="1673.6" y="840" width="1.6" height="11"/><path d="M1675.2 840.5 Q1677.6 839.5 1680.1 841 Q1682.6 842.5 1685.6 841 V847 Q1682.6 848.5 1680.1 847 Q1677.6 845.5 1675.2 846.5 Z"/></g>
<path d="M1985.5 848 L1991 842.5 L1996.5 848" fill="none" stroke="#333" stroke-width="2.4"/>
<g clip-path="url(#clipc)"><circle cx="1648" cy="918" r="19" fill="#27a2db"/>
<g fill="#fff"><rect x="1641.5" y="912.5" width="1.6" height="12"/><path d="M1643.1 913 Q1646 911.5 1648.5 913 Q1651 914.5 1654.5 913 V919.5 Q1651 921 1648.5 919.5 Q1646 918 1643.1 919.5 Z"/></g></g>
<g clip-path="url(#clipc)"><circle cx="1648" cy="1041" r="19" fill="#27a2db"/>
<g fill="#fff"><rect x="1641.5" y="1035.5" width="1.6" height="12"/><path d="M1643.1 1036 Q1646 1034.5 1648.5 1036 Q1651 1037.5 1654.5 1036 V1042.5 Q1651 1044 1648.5 1042.5 Q1646 1041 1643.1 1042.5 Z"/></g></g>
<path d="M2019.5 182 L2023.5 178 L2027.5 182 Z" fill="#a3a3a3"/>
<path d="M2019.5 1026.5 L2023.5 1030.5 L2027.5 1026.5 Z" fill="#505050"/></svg>
</body></html>
